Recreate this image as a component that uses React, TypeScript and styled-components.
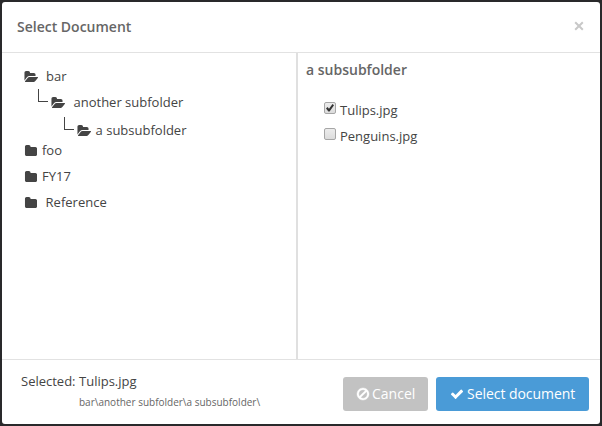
import React from "react";
import styled, { createGlobalStyle } from "styled-components";

const Global = createGlobalStyle`
  * { box-sizing: border-box; }
  html, body { margin: 0; background: #29292b; }
  body { font: 13px/20px "Open Sans", sans-serif; color: #444; overflow: hidden; }
`;

const Backdrop = styled.div`
  height: 426px;
  padding: 2px;
  background: #29292b;
`;

const Dialog = styled.section`
  display: flex;
  flex-direction: column;
  width: 598px;
  height: 422px;
  background: #fff;
  border-radius: 3px;
`;

const Header = styled.header`
  display: flex;
  justify-content: space-between;
  height: 51px;
  padding: 15px 16px 0 15px;
  border-bottom: 1px solid #e2e2e2;
`;

const Title = styled.h1`
  margin: 0;
  font-size: 14px;
  line-height: 20px;
  font-weight: 600;
  color: #666;
`;

const CloseButton = styled.button`
  display: flex;
  align-items: flex-start;
  width: 10px;
  height: 18px;
  padding: 0;
  border: 0;
  background: none;
  color: #c8c8c8;
`;

const Panels = styled.main`
  display: grid;
  grid-template-columns: 294px 1fr;
  height: 306px;
`;

const Tree = styled.ul`
  display: flex;
  flex-direction: column;
  margin: 0;
  padding: 13px 0 0 22px;
  list-style: none;
`;

const TreeRow = styled.li<{ $height: number; $indent?: number; $gap: number }>`
  display: flex;
  align-items: flex-start;
  height: ${(p) => p.$height}px;
  padding-left: ${(p) => p.$indent ?? 0}px;
  line-height: 20px;

  svg { margin-right: ${(p) => p.$gap}px; }
`;

const Branch = styled.span`
  width: 10px;
  height: 13px;
  margin: -3px 3px 0 0;
  border: solid #444;
  border-width: 0 0 1px 1px;
`;

const Glyph = styled.svg<{ $top?: number }>`
  flex: none;
  display: block;
  fill: currentColor;
  margin-top: ${(p) => p.$top ?? 0}px;
`;

const Files = styled.section`
  padding: 7px 0 0 8px;
  border-left: 2px solid #e0e0e0;
`;

const FolderName = styled.h2`
  margin: 0 0 20px;
  font-size: 14px;
  line-height: 20px;
  font-weight: 600;
  color: #666;
`;

const FileRow = styled.label`
  display: flex;
  height: 26px;
  padding-left: 18px;
  gap: 4px;
  line-height: 20px;
`;

const Checkbox = styled.span`
  width: 12px;
  height: 12px;
  margin-top: 2px;
  border: 1px solid #a6a6a6;
  border-radius: 2px;
  background: linear-gradient(#ececec, #dcdcdc);
  color: #333;
`;

const Footer = styled.footer`
  display: flex;
  flex: 1;
  justify-content: space-between;
  padding: 11px 11px 0 19px;
  border-top: 1px solid #e2e2e2;
`;

const Selection = styled.div`
  display: grid;
  grid-template-columns: 58px auto;
  align-content: start;
`;

const Path = styled.span`
  grid-column: 2;
  font-size: 10px;
  line-height: 22px;
  color: #666;
`;

const Actions = styled.div`
  display: flex;
  gap: 8px;
  padding-top: 6px;
`;

const Button = styled.button<{ $primary?: boolean }>`
  display: flex;
  gap: ${(p) => (p.$primary ? 3 : 2)}px;
  width: ${(p) => (p.$primary ? 153 : 85)}px;
  height: 34px;
  padding: 7px 0 0 ${(p) => (p.$primary ? 14 : 13)}px;
  border: 0;
  border-radius: 3px;
  background: ${(p) => (p.$primary ? "#4a9bd7" : "#c2c2c2")};
  color: #fff;
  font: 14px/20px "Open Sans", sans-serif;
  letter-spacing: ${(p) => (p.$primary ? "-0.05px" : "0")};
  white-space: nowrap;
`;

const OPEN =
  "M1943 952q0 31-31 66l-336 396q-43 51-120.5 86.5t-143.5 35.5h-1088q-34 0-60.5-13t-26.5-43q0-31 31-66l336-396q43-51 120.5-86.5t143.5-35.5h1088q34 0 60.5 13t26.5 43zm-343-344v160h-832q-94 0-197 47.5t-164 119.5l-337 396-5 6q0-4-.5-12.5t-.5-12.5v-960q0-92 66-158t158-66h320q92 0 158 66t66 158v32h544q92 0 158 66t66 158z";
const CLOSED =
  "M1728 608v704q0 92-66 158t-158 66h-1216q-92 0-158-66t-66-158v-960q0-92 66-158t158-66h320q92 0 158 66t66 158v32h672q92 0 158 66t66 158z";
const CHECK =
  "M1671 566q0 40-28 68l-724 724-136 136q-28 28-68 28t-68-28l-136-136-362-362q-28-28-28-68t28-68l136-136q28-28 68-28t68 28l294 295 656-657q28-28 68-28t68 28l136 136q28 28 28 68z";
const BAN =
  "M1440 893q0-161-87-295l-754 753q137 89 297 89 111 0 211.5-43.5t173.5-116.5 116-174.5 43-212.5zm-999 299l755-754q-135-91-300-91-148 0-273 73t-198 199-73 274q0 162 89 299zm1223-299q0 157-61 300t-163.5 246-245 164-298.5 61-298.5-61-245-164-163.5-246-61-300 61-299.5 163.5-245.5 245-164 298.5-61 298.5 61 245 164 163.5 245.5 61 299.5z";

const OpenFolder = () => (
  <Glyph $top={4} width="14" height="14" viewBox="0 0 1943 1792" preserveAspectRatio="none">
    <path d={OPEN} />
  </Glyph>
);
const ClosedFolder = () => (
  <Glyph $top={4} width="13" height="14" viewBox="-69 0 1792 1792" preserveAspectRatio="none">
    <path d={CLOSED} />
  </Glyph>
);

type Folder = { name: string; height: number; gap: number; indent?: number; open?: boolean };

const folders: Folder[] = [
  { name: "bar", height: 26, gap: 8, open: true },
  { name: "another subfolder", height: 28, gap: 8.5, indent: 14, open: true },
  { name: "a subsubfolder", height: 20, gap: 4.6, indent: 40, open: true },
  { name: "foo", height: 26, gap: 5 },
  { name: "FY17", height: 26, gap: 5 },
  { name: "Reference", height: 26, gap: 8.6 },
];

const files = [
  { name: "Tulips.jpg", checked: true },
  { name: "Penguins.jpg", checked: false },
];

export default function App() {
  return (
    <Backdrop>
      <Global />
      <Dialog>
        <Header>
          <Title>Select Document</Title>
          <CloseButton aria-label="Close">
            <Glyph $top={4} width="10" height="10" viewBox="0 0 10 10">
              <path d="M1.2 1.2 8.8 8.8M8.8 1.2 1.2 8.8" stroke="currentColor" strokeWidth="2" />
            </Glyph>
          </CloseButton>
        </Header>
        <Panels>
          <Tree>
            {folders.map((f) => (
              <TreeRow key={f.name} $height={f.height} $indent={f.indent} $gap={f.gap}>
                {f.indent && <Branch />}
                {f.open ? <OpenFolder /> : <ClosedFolder />}
                {f.name}
              </TreeRow>
            ))}
          </Tree>
          <Files>
            <FolderName>a subsubfolder</FolderName>
            {files.map((f) => (
              <FileRow key={f.name}>
                <Checkbox role="checkbox" aria-checked={f.checked}>
                  {f.checked && (
                    <Glyph width="10" height="10" viewBox="0 0 10 10">
                      <path d="M1 5.5 2.6 4.1 4 5.7 7.5 1 9 2.3 4.6 8.5H3.4Z" />
                    </Glyph>
                  )}
                </Checkbox>
                {f.name}
              </FileRow>
            ))}
          </Files>
        </Panels>
        <Footer>
          <Selection>
            <span>Selected:</span>
            <span>Tulips.jpg</span>
            <Path>{"bar\\another subfolder\\a subsubfolder\\"}</Path>
          </Selection>
          <Actions>
            <Button>
              <Glyph $top={3} width="14" height="14" viewBox="64 0 1664 1792">
                <path d={BAN} stroke="currentColor" strokeWidth="50" />
              </Glyph>
              Cancel
            </Button>
            <Button $primary>
              <Glyph $top={3} width="14" height="14" viewBox="64 0 1664 1792">
                <path d={CHECK} />
              </Glyph>
              Select document
            </Button>
          </Actions>
        </Footer>
      </Dialog>
    </Backdrop>
  );
}
